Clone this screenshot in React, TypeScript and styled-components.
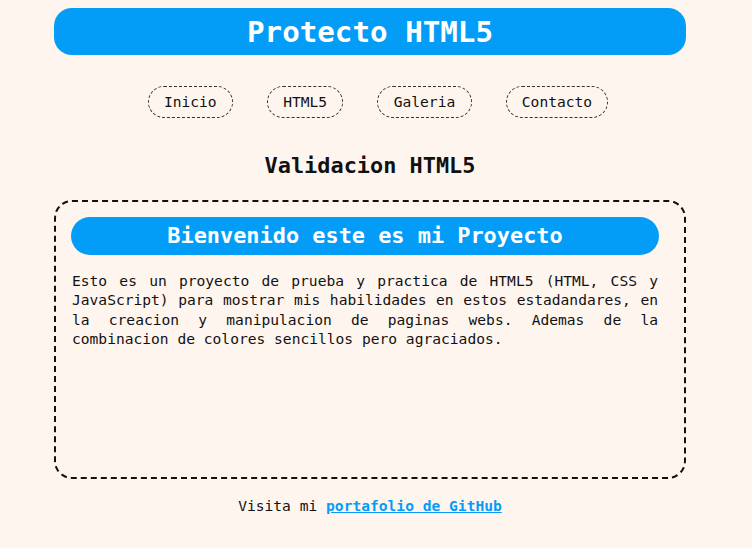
import React from "react";
import styled, { createGlobalStyle } from "styled-components";

const BLUE = "#039df8";

const GlobalStyle = createGlobalStyle`
  html, body {
    background: #fff5ef;
  }
  body {
    margin: 8px;
    font-family: "DejaVu Sans Mono", "Liberation Mono", monospace;
    color: #111;
  }
`;

const Column = styled.div`
  width: 632px;
  margin-left: 46px;
`;

const Header = styled.header`
  height: 47px;
  border-radius: 18px;
  background: ${BLUE};
  color: #fff;
  display: flex;
  align-items: center;
  justify-content: center;
`;

const Title = styled.h1`
  margin: 0;
  font-size: 29.2px;
  font-weight: bold;
`;

const Nav = styled.nav`
  margin-top: 31px;
  display: flex;
  justify-content: center;
  gap: 34px;
  padding-left: 4px;
`;

const Pill = styled.a`
  display: block;
  height: 32px;
  box-sizing: border-box;
  border: 1px dashed #333;
  border-radius: 16px;
  padding: 0 15.3px;
  font-size: 14.6px;
  line-height: 30px;
  color: #111;
  text-decoration: none;
`;

const SectionTitle = styled.h2`
  margin: 35px 0 21px;
  font-size: 21.9px;
  line-height: 26px;
  text-align: center;
  font-weight: bold;
`;

const Card = styled.section`
  box-sizing: border-box;
  height: 279px;
  border: 2px dashed #111;
  border-radius: 18px;
  padding: 15px 25px 15px 15px;
`;

const Banner = styled.h3`
  margin: 0;
  height: 38px;
  border-radius: 19px;
  background: ${BLUE};
  color: #fff;
  font-size: 21.9px;
  line-height: 38px;
  text-align: center;
  font-weight: bold;
`;

const Paragraph = styled.p`
  margin: 16px 0 0;
  padding: 0 1px;
  font-size: 14.6px;
  line-height: 19.3px;
  text-align: justify;
`;

const Footer = styled.footer`
  margin-top: 18px;
  text-align: center;
  font-size: 14.6px;
`;

const Link = styled.a`
  color: ${BLUE};
  font-weight: bold;
  text-decoration: underline;
`;

export default function App() {
  return (
    <>
      <GlobalStyle />
      <Column>
        <Header>
          <Title>Protecto HTML5</Title>
        </Header>
      </Column>
      <Nav>
        <Pill href="#">Inicio</Pill>
        <Pill href="#">HTML5</Pill>
        <Pill href="#">Galeria</Pill>
        <Pill href="#">Contacto</Pill>
      </Nav>
      <Column>
        <SectionTitle>Validacion HTML5</SectionTitle>
        <Card>
          <Banner>Bienvenido este es mi Proyecto</Banner>
          <Paragraph>
            Esto es un proyecto de prueba y practica de HTML5 (HTML, CSS y
            JavaScript) para mostrar mis habilidades en estos estadandares, en
            la creacion y manipulacion de paginas webs. Ademas de la
            combinacion de colores sencillos pero agraciados.
          </Paragraph>
        </Card>
        <Footer>
          Visita mi <Link href="#">portafolio de GitHub</Link>
        </Footer>
      </Column>
    </>
  );
}
